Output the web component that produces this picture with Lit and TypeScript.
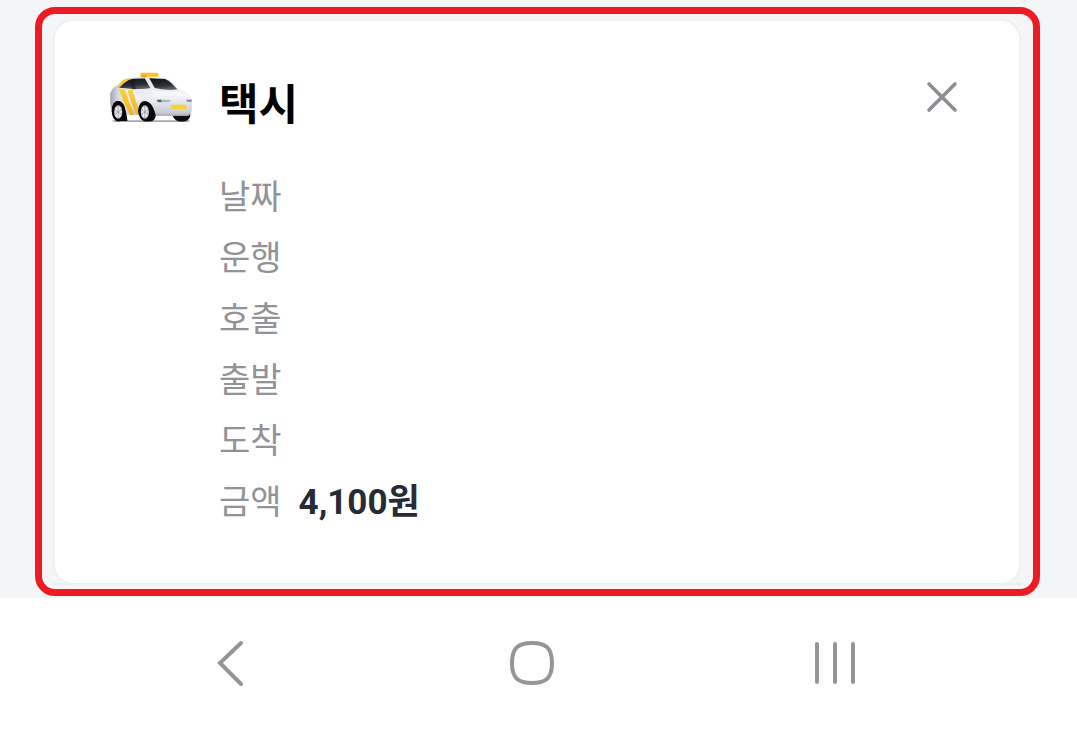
import { LitElement, html, svg, css } from "lit";
import { customElement, property } from "lit/decorators.js";

interface Row {
  label: string;
  value?: string;
}

const taxi = svg`
  <defs>
    <linearGradient id="body" x1="0" y1="0" x2="0" y2="1">
      <stop offset="0" stop-color="#e4e6ed" />
      <stop offset="0.55" stop-color="#eff0f5" />
      <stop offset="1" stop-color="#bfc2ce" />
    </linearGradient>
    <linearGradient id="side" x1="0" y1="0" x2="1" y2="0">
      <stop offset="0" stop-color="#9da1af" />
      <stop offset="0.2" stop-color="#d4d6e0" stop-opacity="0.7" />
      <stop offset="0.5" stop-color="#ffffff" stop-opacity="0" />
    </linearGradient>
    <linearGradient id="glass" x1="0" y1="0" x2="0.3" y2="1">
      <stop offset="0" stop-color="#0f1114" />
      <stop offset="0.7" stop-color="#2a2d32" />
      <stop offset="1" stop-color="#565a62" />
    </linearGradient>
    <linearGradient id="gold" x1="0" y1="0" x2="0" y2="1">
      <stop offset="0" stop-color="#fbd335" />
      <stop offset="1" stop-color="#f3b021" />
    </linearGradient>
  </defs>
  <path d="M38 178H268L262 183H46Z" fill="#a5a7ad" />
  <path d="M216 158H268V166Q264 182 248 182H238Q222 180 216 164Z" fill="#0d0e11" />
  <path d="M34 98Q40 82 57 74Q73 58 92 54Q112 50 150 51L196 54Q208 58 217 68L234 88Q262 94 272 114Q275 132 272 152Q270 162 260 165L164 166L62 160L36 146Q32 120 34 98Z" fill="url(#body)" />
  <path d="M34 98Q40 82 57 74L130 88L164 166L62 160L36 146Q32 120 34 98Z" fill="url(#side)" />
  <path d="M70 61Q82 54 94 54L86 62Q72 72 62 82L52 84Q58 72 70 61Z" fill="#f4c630" />
  <path d="M59 86L76 87Q84 112 104 162L92 163Q68 118 59 86Z" fill="url(#gold)" />
  <path d="M84 88L99 90Q108 124 123 158L111 163Q92 122 84 88Z" fill="url(#gold)" />
  <path d="M60 83Q72 68 88 60Q104 55 135 56L151 84Q122 90 60 83Z" fill="url(#glass)" />
  <path d="M92 58L101 56L110 87L97 87Z" fill="#17191d" opacity="0.55" />
  <path d="M148 55L194 57Q205 61 213 70L230 87Q196 92 164 84Z" fill="url(#glass)" />
  <path d="M154 92Q198 98 234 91Q260 97 268 112Q218 104 164 110Z" fill="#f8f8fb" opacity="0.8" />
  <path d="M125 39H171L175 42V48L172 51H127L122 49V42Z" fill="#fac41c" />
  <path d="M122 47H140V52H126Z" fill="#e49c19" />
  <path d="M168 117H180L211 119L208 125L176 126Q169 125 168 117Z" fill="#a9b9c5" />
  <path d="M170 119L182 118L184 125L176 125Z" fill="#4d5966" />
  <path d="M255 118L273 117Q273 123 270 125H260Z" fill="#8496a6" />
  <rect x="211" y="133" width="46" height="12" rx="2" fill="#f9d02f" />
  <path d="M164 157Q216 164 269 156Q266 166 258 166H164Z" fill="#a9acb8" opacity="0.6" />
  <path d="M38 148Q40 122 57 122Q78 126 84 180H54Q40 170 38 148Z" fill="#08090b" />
  <ellipse cx="58" cy="152" rx="20" ry="30" fill="#08090b" />
  <ellipse cx="57" cy="154" rx="12" ry="20" fill="#cfd1d8" />
  <ellipse cx="57" cy="154" rx="8" ry="16" fill="#f0f0f4" />
  <path d="M57 135V173M46 146L68 162M46 162L68 146" stroke="#85888f" stroke-width="2" />
  <path d="M115 150Q118 122 136 122Q158 124 167 166Q164 182 150 182H134Q118 176 115 150Z" fill="#08090b" />
  <ellipse cx="135" cy="154" rx="12" ry="20" fill="#cfd1d8" />
  <ellipse cx="135" cy="154" rx="8" ry="16" fill="#f0f0f4" />
  <path d="M135 135V173M124 146L146 162M124 162L146 146" stroke="#85888f" stroke-width="2" />
`;

@customElement("ride-card")
class RideCard extends LitElement {
  @property() heading = "";
  @property({ attribute: false }) rows: Row[] = [];

  static styles = css`
    :host {
      display: block;
      box-sizing: border-box;
      padding: 50px 54px;
      background: #fff;
      border: 2px solid #eef0f1;
      border-radius: 20px;
    }
    .header {
      display: grid;
      grid-template-columns: 110px 1fr auto;
      align-items: start;
      height: 96px;
    }
    .taxi {
      display: block;
      width: 84px;
      height: 52px;
    }
    .title {
      margin: 0;
      font-size: 43px;
      line-height: 68px;
      font-weight: 700;
      color: #000;
    }
    .close {
      display: block;
      margin: 6px 0 0;
      padding: 4px;
      border: 0;
      background: none;
      cursor: pointer;
    }
    .close svg {
      display: block;
      width: 38px;
      height: 32px;
    }
    .rows {
      margin: 0 0 0 110px;
    }
    .row {
      display: flex;
      gap: 17px;
      font-size: 34px;
      line-height: 61px;
    }
    .label {
      color: #929397;
    }
    .value {
      margin: 0;
      color: #262b36;
      font-weight: 700;
      font-size: 35px;
    }
  `;

  render() {
    return html`
      <header class="header">
        <svg class="taxi" viewBox="30 34 246 152" aria-hidden="true">${taxi}</svg>
        <h1 class="title">${this.heading}</h1>
        <button class="close" type="button" aria-label="닫기">
          <svg viewBox="0 0 38 32" fill="none" stroke="#8c8e93" stroke-width="3.6" stroke-linecap="round" aria-hidden="true">
            <path d="M6 3L32 29M32 3L6 29" />
          </svg>
        </button>
      </header>
      <dl class="rows">
        ${this.rows.map(
          (row) => html`
            <div class="row">
              <dt class="label">${row.label}</dt>
              <dd class="value">${row.value ?? ""}</dd>
            </div>
          `
        )}
      </dl>
    `;
  }
}

@customElement("app-root")
class AppRoot extends LitElement {
  private rows: Row[] = [
    { label: "날짜" },
    { label: "운행" },
    { label: "호출" },
    { label: "출발" },
    { label: "도착" },
    { label: "금액", value: "4,100원" },
  ];

  static styles = css`
    :host {
      display: flex;
      flex-direction: column;
      min-height: 100vh;
      background: #fff;
      font-family: Roboto, "Noto Sans CJK KR", sans-serif;
    }
    .screen {
      padding: 7px 37px 2px 35px;
      background: #f3f5f7;
    }
    .frame {
      padding: 5px 12px 4px 11px;
      border: 7px solid #ed1c24;
      border-radius: 20px;
    }
    .entry {
      border-bottom: 2px solid #e9edf0;
    }
    .entry ride-card {
      margin-bottom: -2px;
    }
    .nav {
      display: grid;
      grid-template-columns: repeat(3, 1fr);
      justify-items: center;
      padding: 40px 91px 0 79px;
    }
    .key {
      padding: 0;
      border: 0;
      background: none;
      cursor: pointer;
    }
    .key svg {
      display: block;
      width: 50px;
      height: 50px;
      fill: none;
      stroke: #959595;
      stroke-width: 4;
      stroke-linecap: round;
    }
  `;

  render() {
    return html`
      <main class="screen">
        <div class="frame">
          <div class="entry">
            <ride-card heading="택시" .rows=${this.rows}></ride-card>
          </div>
        </div>
      </main>
      <nav class="nav">
        <button class="key" type="button" aria-label="뒤로">
          <svg viewBox="0 0 50 50" aria-hidden="true"><path d="M36 5L15 25L36 46" /></svg>
        </button>
        <button class="key" type="button" aria-label="홈">
          <svg viewBox="0 0 50 50" aria-hidden="true">
            <path d="M25 5C39 5 45 10 45 25S39 45 25 45S5 40 5 25S11 5 25 5Z" />
          </svg>
        </button>
        <button class="key" type="button" aria-label="최근 앱">
          <svg viewBox="0 0 50 50" aria-hidden="true"><path d="M7 6V44M25 6V44M43 6V44" /></svg>
        </button>
      </nav>
    `;
  }
}
